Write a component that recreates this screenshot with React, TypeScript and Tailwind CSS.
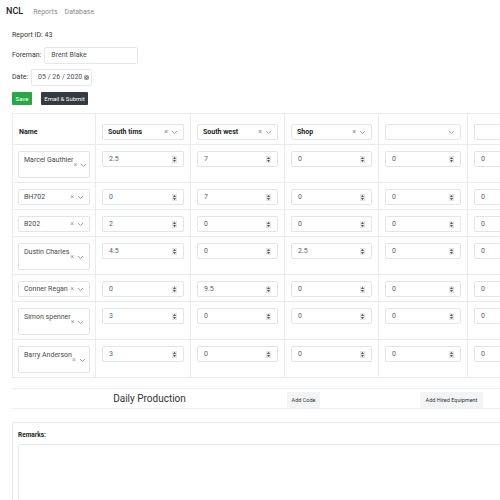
import { Fragment } from 'react'

type Row = { name: string; tall: boolean; values: string[] }

const columns = [
  { label: 'South tims', width: 'w-[95px]' },
  { label: 'South west', width: 'w-[94px]' },
  { label: 'Shop', width: 'w-[94px]' },
  { label: '', width: 'w-[89px]' },
  { label: '', width: 'w-[95px]' },
]

const rows: Row[] = [
  { name: 'Marcel Gauthier', tall: true, values: ['2.5', '7', '0', '0', '0'] },
  { name: 'BH702', tall: false, values: ['0', '7', '0', '0', '0'] },
  { name: 'B202', tall: false, values: ['2', '0', '0', '0', '0'] },
  { name: 'Dustin Charles', tall: true, values: ['4.5', '0', '2.5', '0', '0'] },
  { name: 'Conner Regan', tall: false, values: ['0', '9.5', '0', '0', '0'] },
  { name: 'Simon spenner', tall: true, values: ['3', '0', '0', '0', '0'] },
  { name: 'Barry Anderson', tall: true, values: ['3', '0', '0', '0', '0'] },
]

function Chevron() {
  return (
    <svg width="7" height="5" viewBox="0 0 7 5" className="text-[#9a9a9a]">
      <path d="M1 1l2.5 2.5L6 1" fill="none" stroke="currentColor" strokeWidth="0.9" />
    </svg>
  )
}

function Indicators({ clear = true }: { clear?: boolean }) {
  return (
    <div className="flex shrink-0 items-center gap-[3px] pr-[5px]">
      {clear && <span className="text-[7px] leading-none text-[#a0a0a0]">×</span>}
      <Chevron />
    </div>
  )
}

function Spinner() {
  return (
    <div className="mr-[6px] flex h-[7px] w-[5px] flex-col items-center justify-center gap-[1px] bg-[#e4e4e4]">
      <svg width="3" height="2" viewBox="0 0 3 2">
        <path d="M0 2L1.5 0L3 2z" fill="#555" />
      </svg>
      <svg width="3" height="2" viewBox="0 0 3 2">
        <path d="M0 0L1.5 2L3 0z" fill="#555" />
      </svg>
    </div>
  )
}

function NumberInput({ value }: { value: string }) {
  return (
    <div className="flex h-[16px] items-center justify-between rounded-[2px] border border-[#e1e4e8] bg-white">
      <span className="pl-[6px] text-[7px] text-[#5c6269]">{value}</span>
      <Spinner />
    </div>
  )
}

function NameSelect({ name, tall }: { name: string; tall: boolean }) {
  if (tall) {
    return (
      <div className="flex h-[27px] items-center justify-between rounded-[2px] border border-[#e1e4e8] bg-white">
        <span className="self-start whitespace-nowrap pl-[5px] pt-[3px] text-[7px] text-[#4a4a4a]">{name}</span>
        <div className="pt-[2px]">
          <Indicators />
        </div>
      </div>
    )
  }
  return (
    <div className="flex h-[16px] items-center justify-between rounded-[2px] border border-[#e1e4e8] bg-white">
      <span className="whitespace-nowrap pl-[5px] text-[7px] text-[#4a4a4a]">{name}</span>
      <Indicators />
    </div>
  )
}

function HeaderSelect({ label }: { label: string }) {
  return (
    <div className="flex h-[16px] items-center justify-between rounded-[2px] border border-[#e1e4e8] bg-white">
      <span className="whitespace-nowrap pl-[5px] text-[7px] font-bold text-[#222]">{label}</span>
      <Indicators clear={label !== ''} />
    </div>
  )
}

export default function App() {
  return (
    <div className="h-[500px] w-[500px] overflow-hidden bg-white font-['Roboto',sans-serif] text-[#212529]">
      <nav className="flex h-[24px] items-center px-[6px]">
        <span className="text-[9px] font-medium text-[#222]">NCL</span>
        <span className="ml-[10px] text-[7px] text-[#8a8a8a]">Reports</span>
        <span className="ml-[7px] text-[7px] text-[#8a8a8a]">Database</span>
      </nav>

      <div className="px-[12px]">
        <div className="mt-[7px] text-[7px] leading-[9px] text-[#333]">Report ID: 43</div>

        <div className="mt-[7px] flex items-center gap-[3px]">
          <span className="text-[7px] text-[#333]">Foreman:</span>
          <div className="flex h-[17px] w-[94px] items-center rounded-[2px] border border-[#e5e7ea] pl-[6px] text-[7px] text-[#495057]">
            Brent Blake
          </div>
        </div>

        <div className="mt-[5px] flex items-center gap-[3px]">
          <span className="text-[7px] text-[#333]">Date:</span>
          <div className="flex h-[17px] w-[61px] items-center gap-[2px] rounded-[2px] border border-[#e5e7ea] pl-[6px] text-[7px] text-[#495057]">
            05 / 26 / 2020
            <svg width="5" height="5" viewBox="0 0 10 10">
              <circle cx="5" cy="5" r="5" fill="#8a8a8a" />
              <path d="M3.2 3.2l3.6 3.6M6.8 3.2l-3.6 3.6" stroke="#fff" strokeWidth="1.3" />
            </svg>
          </div>
        </div>

        <div className="mt-[6px] flex items-center gap-[9px]">
          <button className="h-[13px] w-[20px] rounded-[1px] bg-[#28a745] text-[6px] text-white">Save</button>
          <button className="h-[13px] w-[47px] rounded-[1px] bg-[#343a40] text-[6px] text-white">Email &amp; Submit</button>
        </div>

        <table className="mt-[8px] w-[550px] table-fixed border-collapse border border-[#e9ecef]">
          <colgroup>
            <col className="w-[83px]" />
            {columns.map((c, i) => (
              <col key={i} className={c.width} />
            ))}
          </colgroup>
          <thead>
            <tr className="h-[31px]">
              <th className="border border-[#e9ecef] px-[6px] pb-[7px] text-left align-bottom text-[7px] font-bold text-[#222]">
                Name
              </th>
              {columns.map((c, i) => (
                <th key={i} className="border border-[#e9ecef] px-[6px] pb-[4px] align-bottom">
                  <HeaderSelect label={c.label} />
                </th>
              ))}
            </tr>
          </thead>
          <tbody>
            {rows.map((r) => (
              <Fragment key={r.name}>
                <tr className={r.tall ? 'h-[38px]' : 'h-[27px]'}>
                  <td className="border border-[#e9ecef] px-[5px] pt-[6px] align-top">
                    <NameSelect name={r.name} tall={r.tall} />
                  </td>
                  {r.values.map((v, i) => (
                    <td key={i} className="border border-[#e9ecef] px-[6px] pt-[6px] align-top">
                      <NumberInput value={v} />
                    </td>
                  ))}
                </tr>
              </Fragment>
            ))}
          </tbody>
        </table>

        <div className="mt-[10px] flex h-[21px] w-[600px] items-center border-y border-[#eceef0]">
          <div className="w-[275px] text-center text-[10px] text-[#333]">Daily Production</div>
          <div className="flex w-[133px] items-end self-stretch">
            <button className="h-[16px] w-[33px] bg-[#f3f4f5] text-[5.5px] text-[#333]">Add Code</button>
          </div>
          <div className="flex items-end self-stretch">
            <button className="h-[16px] w-[63px] bg-[#f3f4f5] text-[5.5px] text-[#333]">Add Hired Equipment</button>
          </div>
        </div>

        <div className="mt-[13px] w-[600px] rounded-[2px] border border-[#e5e7ea] px-[5px] pt-[8px]">
          <div className="text-[6.5px] font-bold text-[#222]">Remarks:</div>
          <div className="mt-[3px] h-[80px] rounded-[2px] border border-[#e5e7ea]" />
        </div>
      </div>
    </div>
  )
}
